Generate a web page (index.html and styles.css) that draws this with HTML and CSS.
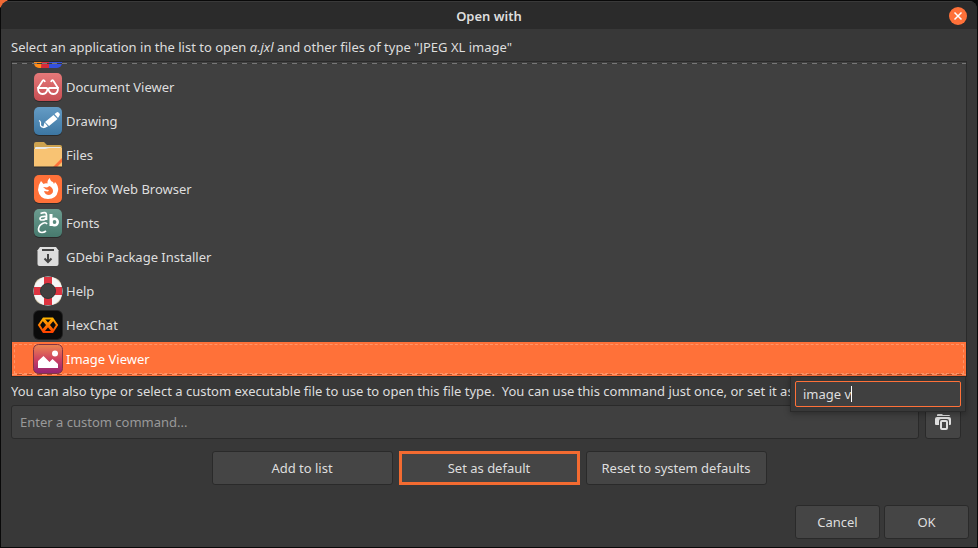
FILE: index.html
```html
<!DOCTYPE html>
<html lang="en">
<head>
    <meta charset="UTF-8">
    <meta name="viewport" content="width=device-width, initial-scale=1.0">
    <title>Open with</title>
    <link rel="stylesheet" href="styles.css">
</head>
<body>
    <div class="dialog">
        <header class="titlebar">
            <h1>Open with</h1>
            <button class="close" aria-label="Close">
                <svg width="18" height="18" viewBox="0 0 18 18"><path d="M5.5 5.5l7 7M12.5 5.5l-7 7" stroke="#fff" stroke-width="1.5"/></svg>
            </button>
        </header>

        <main class="content">
            <p class="intro">Select an application in the list to open <i>a.jxl</i> and other files of type "JPEG XL image"</p>

            <ul class="app-list" role="listbox" aria-label="Applications">
                <li role="option">
                    <svg class="app-icon" viewBox="0 0 30 30">
                        <defs><clipPath id="tile"><rect x="1" y="2" width="28" height="28" rx="5"/></clipPath></defs>
                        <g clip-path="url(#tile)">
                            <path d="M1 1h9v29H1z" fill="#ff8c1a"/>
                            <path d="M10 1h7v29H8z" fill="#d62b3a"/>
                            <path d="M17 1h12v29H16z" fill="#3350dd"/>
                        </g>
                    </svg>
                </li>
                <li role="option">
                    <svg class="app-icon" viewBox="0 0 30 30">
                        <defs><linearGradient id="red" x2="0" y2="1"><stop stop-color="#e57979"/><stop offset="1" stop-color="#c74e53"/></linearGradient></defs>
                        <rect x="1" y="2" width="28" height="28" rx="5" fill="#2a2a2a"/>
                        <rect x="1" y="1" width="28" height="28" rx="5" fill="url(#red)"/>
                        <g fill="none" stroke="#fff" stroke-width="1.8">
                            <path d="M5 16h8.500q1.500 0 .5 3-1 3-4.500 3Q5 22 5 16zM25 16h-8.500q-1.500 0-.5 3 1 3 4.500 3Q25 22 25 16zM13.500 17h3"/>
                            <path d="M5 16l4.500-7q1.500-2 2.500 1M25 16l-4.500-7q-1.500-2-2.500 1"/>
                        </g>
                    </svg>
                    <span>Document Viewer</span>
                </li>
                <li role="option">
                    <svg class="app-icon" viewBox="0 0 30 30">
                        <defs><linearGradient id="blue" x2="0" y2="1"><stop stop-color="#659cc5"/><stop offset="1" stop-color="#3c76a2"/></linearGradient></defs>
                        <rect x="1" y="2" width="28" height="28" rx="5" fill="#2a2a2a"/>
                        <rect x="1" y="1" width="28" height="28" rx="5" fill="url(#blue)"/>
                        <path d="M12 16l8.500-7 4 4-8.500 7zM21.500 8l2-1.500q1-.8 2 0l1 1q.8 1 0 2L25 12z" fill="#fff"/>
                        <path d="M6 14.500q2 1 1.500 3.500t3 3.500l3-1" fill="none" stroke="#fff" stroke-width="1.200"/>
                        <path d="M11.500 16.500l3.500 4-5 1.500z" fill="#fff"/>
                    </svg>
                    <span>Drawing</span>
                </li>
                <li role="option">
                    <svg class="app-icon" viewBox="0 0 30 30">
                        <path d="M1 4q0-2 2-2h8l3 3h13q2 0 2 2v8H1z" fill="#cda24f"/>
                        <path d="M3 7h24q1 0 1 1v4H2V8q0-1 1-1z" fill="#e8e8e8"/>
                        <path d="M1 9h11l4-1h13v19H1z" fill="#f8c373"/>
                        <path d="M20 27l9-9v4l-5 5z" fill="#ff7139"/>
                        <path d="M1 27h28" stroke="#2a2a2a"/>
                    </svg>
                    <span>Files</span>
                </li>
                <li role="option">
                    <svg class="app-icon" viewBox="0 0 30 30">
                        <rect x="1" y="2" width="28" height="28" rx="5" fill="#2a2a2a"/>
                        <rect x="1" y="1" width="28" height="28" rx="5" fill="#ff7139"/>
                        <path d="M8 7l2.500 3q2-1 4-.5Q14 6 17 4q0 3 3 4l1 2 1-2q4 4 3 9-1.500 8-10 8T5 16q0-5 3-9z" fill="#fff"/>
                        <path d="M10 13l4 .5 2.500-1.500q3.500 2 3.500 5t-4 4q-4 0-5-4l4 .5 1-1.500-3-.5z" fill="#ff7139"/>
                    </svg>
                    <span>Firefox Web Browser</span>
                </li>
                <li role="option">
                    <svg class="app-icon" viewBox="0 0 30 30">
                        <defs><linearGradient id="green" x2="0" y2="1"><stop stop-color="#6c9c90"/><stop offset="1" stop-color="#477a6e"/></linearGradient></defs>
                        <rect x="1" y="2" width="28" height="28" rx="5" fill="#2a2a2a"/>
                        <rect x="1" y="1" width="28" height="28" rx="5" fill="url(#green)"/>
                        <g fill="none" stroke="#fff">
                            <path d="M7.500 5.500q6-2.500 6 1.500v5M13.500 8.500q-6.500-.5-6.500 2 0 1.500 2 1.500 4 0 4.500-3" stroke-width="1.700"/>
                            <path d="M18 6v12" stroke-width="3"/>
                            <ellipse cx="21.500" cy="14" rx="3.200" ry="3.300" stroke-width="2.600"/>
                            <path d="M14 16q-1-2-4-.8-4 1.800-4.500 5.800 0 3.500 3.500 3.500 2 0 4-1.500" stroke-width="1.700"/>
                        </g>
                    </svg>
                    <span>Fonts</span>
                </li>
                <li role="option">
                    <svg class="app-icon" viewBox="0 0 30 30">
                        <path d="M7 5h16l3 4H4z" fill="#e0e0e0"/>
                        <path d="M4.500 9h21v13q0 2-2 2h-17q-2 0-2-2z" fill="#dcdcdc"/>
                        <path d="M9 8h12M15 12v8M11.500 16.500L15 20l3.500-3.500" fill="none" stroke="#444" stroke-width="2"/>
                    </svg>
                    <span>GDebi Package Installer</span>
                </li>
                <li role="option">
                    <svg class="app-icon" viewBox="0 0 30 30">
                        <rect x="2" y="2" width="26" height="26" rx="9" fill="none" stroke="#d1c3a5" stroke-width="1.500"/>
                        <circle cx="15" cy="15" r="11" fill="none" stroke="#f5f5f5" stroke-width="7"/>
                        <path d="M11 1h8v8h-8zM11 21h8v8h-8zM1 11h8v8H1zM21 11h8v8h-8z" fill="#dd3440"/>
                        <circle cx="15" cy="15" r="7.500" fill="#404040" stroke="#343434"/>
                    </svg>
                    <span>Help</span>
                </li>
                <li role="option">
                    <svg class="app-icon" viewBox="0 0 30 30">
                        <defs><linearGradient id="fire" gradientUnits="userSpaceOnUse" x1="0" y1="8" x2="0" y2="23"><stop stop-color="#ffb600"/><stop offset="1" stop-color="#ff3c00"/></linearGradient></defs>
                        <rect width="30" height="30" rx="6" fill="#222"/>
                        <rect x="1" y="1" width="28" height="28" rx="5" fill="#0b0b0b"/>
                        <g fill="none" stroke="url(#fire)">
                            <path d="M10.500 8.500h9L24 15l-4.500 7h-9L6 15z" stroke-width="2"/>
                            <path d="M10 9l10 12M20 9L10 21" stroke-width="3"/>
                        </g>
                    </svg>
                    <span>HexChat</span>
                </li>
                <li role="option" class="selected" aria-selected="true">
                    <svg class="app-icon" viewBox="0 0 30 30">
                        <defs><linearGradient id="dusk" x2="0" y2="1"><stop stop-color="#ec8750"/><stop offset=".5" stop-color="#cf4360"/><stop offset="1" stop-color="#922375"/></linearGradient></defs>
                        <rect x=".5" y=".5" width="29" height="29" rx="5" fill="url(#dusk)" stroke="#823544"/>
                        <path d="M5 24v-7l5.500-5 6 6 3-3L25 20v4z" fill="#fff"/>
                        <circle cx="22" cy="9.500" r="3" fill="#fff"/>
                    </svg>
                    <span>Image Viewer</span>
                </li>
            </ul>

            <label class="hint" for="command">You can also type or select a custom executable file to use to open this file type.&nbsp; You can use this command just once, or set it as default.</label>

            <div class="command-row">
                <input type="text" id="command" class="command" placeholder="Enter a custom command...">
                <button class="browse" aria-label="Browse">
                    <svg width="18" height="18" viewBox="0 0 18 18">
                        <path d="M3 2q0-1 1-1h4l1 1h6q1 0 1 1H3z" fill="#dedede"/>
                        <path d="M1 6q0-2 2-2h12q2 0 2 2v5q0 1-1 1h-1V8q0-2-2-2H7Q5 6 5 8v4H2q-1 0-1-1z" fill="#dedede"/>
                        <rect x="7" y="8" width="6" height="8" rx="1" fill="none" stroke="#dedede" stroke-width="2"/>
                    </svg>
                </button>
                <div class="search-popup">
                    <input type="text" class="search" aria-label="Search applications" value="image v">
                    <span class="caret"></span>
                </div>
            </div>

            <div class="actions">
                <button>Add to list</button>
                <button class="highlight">Set as default</button>
                <button>Reset to system defaults</button>
            </div>
        </main>

        <footer class="footer">
            <button>Cancel</button>
            <button>OK</button>
        </footer>
    </div>
</body>
</html>
```

FILE: styles.css
```css
* {
    box-sizing: border-box;
}
body {
    margin: 0;
    padding: 1px;
    background: linear-gradient(135deg, #f06a35 5px, #090909 6px);
    color: #dedede;
    font-family: "Noto Sans", sans-serif;
    font-size: 13px;
    line-height: 18px;
}
button,
input {
    font: inherit;
    color: inherit;
}
button {
    height: 34px;
    padding: 0;
    border: 1px solid #2a2a2a;
    border-radius: 3px;
    background-color: #454545;
}
svg {
    display: block;
}
.dialog {
    display: flex;
    flex-direction: column;
    height: calc(100vh - 2px);
    background-color: #383838;
    border-radius: 8px 8px 0 0;
    overflow: hidden;
}
.titlebar {
    display: grid;
    grid-template-columns: 1fr auto 1fr;
    align-items: center;
    height: 28px;
    padding: 0 10px;
    background-color: #2b2b2b;
    border-top: 1px solid #393939;
}
h1 {
    grid-column: 2;
    margin: 0;
    font-size: 13px;
    font-weight: 600;
}
.close {
    justify-self: end;
    width: 18px;
    height: 18px;
    border: none;
    border-radius: 50%;
    background-color: #ff7139;
}
.content {
    display: flex;
    flex-direction: column;
    flex: 1;
    min-height: 0;
    padding: 9px 10px 0;
}
.intro {
    margin: 0 0 5px;
    white-space: nowrap;
}
.app-list {
    position: relative;
    display: flex;
    flex-direction: column;
    justify-content: flex-end;
    flex: 1;
    min-height: 0;
    margin: 0;
    padding: 0;
    border: 1px solid #2a2a2a;
    background-color: #404040;
    list-style: none;
    overflow: hidden;
}
/* dashed edges: more rows above and below */
.app-list::before,
.app-list::after {
    content: "";
    position: absolute;
    z-index: 2;
    left: 0;
    right: 0;
    height: 1px;
}
.app-list::before {
    top: 1px;
    background: repeating-linear-gradient(90deg, #777 0 5px, #383838 5px 10px);
}
.app-list::after {
    bottom: 1px;
    background: repeating-linear-gradient(90deg, #ff9467 0 5px, #b8502a 5px 10px);
}
.app-list li {
    display: flex;
    align-items: center;
    flex: none;
    gap: 3px;
    height: 34px;
    padding-left: 21px;
}
.app-list .selected {
    background-color: #ff7139;
    color: #fff;
    outline: 1px dashed #ff9467;
    outline-offset: -3px;
}
.app-icon {
    position: relative;
    z-index: 1;
    width: 30px;
    height: 30px;
}
.hint {
    padding: 5px 0;
    white-space: nowrap;
    overflow: hidden;
}
.command-row {
    position: relative;
    display: flex;
    gap: 6px;
    padding-right: 6px;
}
.command {
    flex: 1;
    min-width: 0;
    height: 34px;
    padding: 0 8px;
    border: 1px solid #2a2a2a;
    border-radius: 3px;
    background-color: #404040;
}
.command::placeholder {
    color: #999;
}
.browse {
    display: grid;
    place-items: center;
    width: 36px;
}
.search-popup {
    position: absolute;
    z-index: 3;
    right: 1px;
    bottom: 27px;
    width: 176px;
    padding: 4px;
    border: 1px solid #2a2a2a;
    background-color: #383838;
    box-shadow: 0 2px 6px rgba(0,0,0,0.3);
}
.search {
    display: block;
    width: 100%;
    height: 26px;
    padding: 0 7px;
    border: 1px solid #ff7139;
    border-radius: 2px;
    background-color: #404040;
    outline: none;
}
.caret {
    position: absolute;
    left: 60px;
    top: 9px;
    width: 1px;
    height: 16px;
    background-color: #fff;
}
.actions {
    display: flex;
    justify-content: center;
    gap: 6px;
    padding-top: 12px;
}
.actions button {
    width: 181px;
}
.actions .highlight {
    border: 3px solid #f36b31;
    border-radius: 0;
}
.footer {
    display: flex;
    justify-content: flex-end;
    gap: 4px;
    padding: 20px 8px 8px;
}
.footer button {
    width: 85px;
}
```
